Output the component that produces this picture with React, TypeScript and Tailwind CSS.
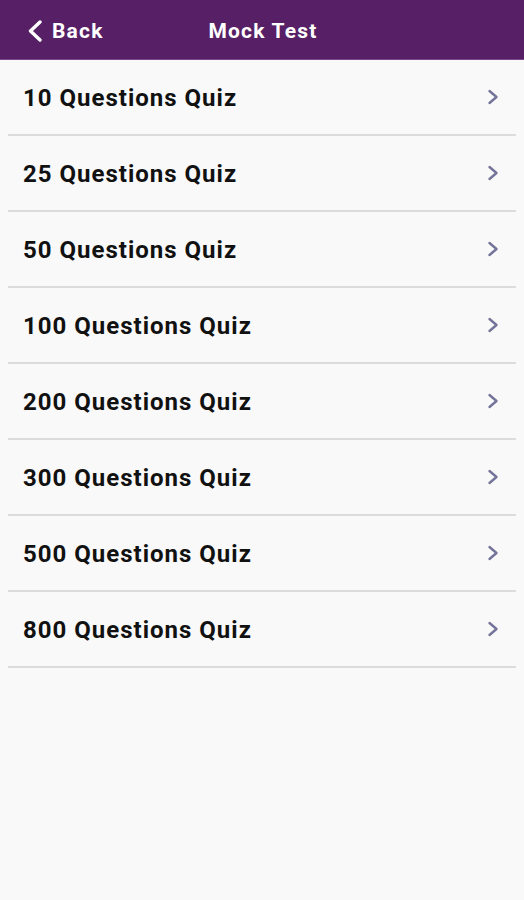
import React from "react";

const items = [
  "10 Questions Quiz",
  "25 Questions Quiz",
  "50 Questions Quiz",
  "100 Questions Quiz",
  "200 Questions Quiz",
  "300 Questions Quiz",
  "500 Questions Quiz",
  "800 Questions Quiz",
];

export default function App() {
  return (
    <div
      className="w-[524px] h-[900px] bg-[#f9f9f9] flex flex-col"
      style={{ fontFamily: "Roboto, 'Noto Sans', sans-serif" }}
    >
      <div className="h-[60px] bg-[#561f66] border-b border-[#7a4a8a] relative flex items-center justify-center shrink-0">
        <div className="absolute left-[27px] top-0 h-full flex items-center gap-[9px] pt-[3px]">
          <svg width="16" height="22" viewBox="0 0 16 22" fill="none">
            <path d="M13 2 L3.5 11 L13 20" stroke="#ffffff" strokeWidth="3.4" strokeLinecap="round" strokeLinejoin="round" />
          </svg>
          <span className="text-white font-bold text-[21px] tracking-[1.2px] leading-none">Back</span>
        </div>
        <span className="text-white font-bold text-[21px] tracking-[1.2px] leading-none pt-[3px] pl-[2px]">Mock Test</span>
      </div>
      <div className="flex flex-col">
        {items.map((t) => (
          <div key={t} className="mx-2 h-[76px] border-b-2 border-[#dcdcdc] flex items-center justify-between pl-[15px] pr-[16px]">
            <span className="text-[24px] font-bold tracking-[1px] text-[#111111] leading-none pt-[2px]">{t}</span>
            <svg width="14" height="16" viewBox="0 0 14 16" fill="none">
              <path d="M3.5 2 L10.5 8 L3.5 14" stroke="#74749a" strokeWidth="2.4" strokeLinecap="round" strokeLinejoin="round" />
            </svg>
          </div>
        ))}
      </div>
    </div>
  );
}
